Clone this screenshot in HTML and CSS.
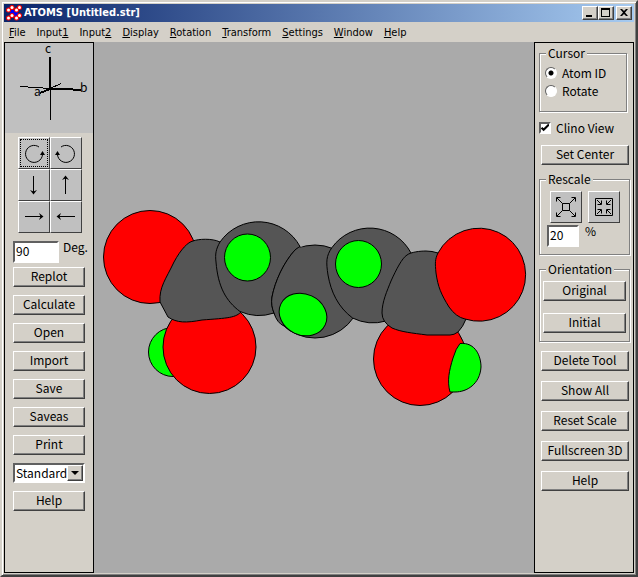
FILE: index.html
```
<!DOCTYPE html>
<html lang="en">
<head>
  <meta charset="UTF-8">
  <title>ATOMS [Untitled.str]</title>
  <link rel="stylesheet" href="styles.css">
</head>
<body>
<div class="window">

  <header class="titlebar">
    <svg class="app-icon" width="16" height="16" viewBox="0 0 16 16">
      <path fill="#0000ff" d="M4 5h8v7h-8z"/>
      <g fill="#ff0000">
        <circle cx="2.500" cy="5" r="2.500"/><circle cx="6" cy="2.500" r="2.500"/><circle cx="10.500" cy="5" r="2.500"/><circle cx="13.500" cy="2.500" r="2.500"/>
        <circle cx="2.500" cy="13" r="2.500"/><circle cx="6" cy="10.500" r="2.500"/><circle cx="10.500" cy="13" r="2.500"/><circle cx="13.500" cy="10.500" r="2.500"/>
      </g>
      <g fill="#ffffff">
        <circle cx="2.500" cy="5" r="1.500"/><circle cx="6" cy="2.500" r="1.500"/><circle cx="10.500" cy="5" r="1.500"/><circle cx="13.500" cy="2.500" r="1.500"/>
        <circle cx="2.500" cy="13" r="1.500"/><circle cx="6" cy="10.500" r="1.500"/><circle cx="10.500" cy="13" r="1.500"/><circle cx="13.500" cy="10.500" r="1.500"/>
      </g>
    </svg>
    <h1>ATOMS [Untitled.str]</h1>
    <div class="caption-buttons">
      <button class="caption-btn" aria-label="Minimize"><svg width="12" height="10"><path d="M2 7h6v2h-6z"/></svg></button>
      <button class="caption-btn" aria-label="Maximize"><svg width="12" height="10"><path fill-rule="evenodd" d="M1 0h9v9h-9zM2 2v6h7v-6z"/></svg></button>
      <button class="caption-btn close" aria-label="Close"><svg width="12" height="10"><path d="M2 1h2l2 2 2-2h2l-3 3.500 3 3.500h-2l-2-2-2 2h-2l3-3.500z"/></svg></button>
    </div>
  </header>

  <nav class="menu">
    <a href="#"><u>F</u>ile</a>
    <a href="#">Input<u>1</u></a>
    <a href="#">Input<u>2</u></a>
    <a href="#"><u>D</u>isplay</a>
    <a href="#"><u>R</u>otation</a>
    <a href="#"><u>T</u>ransform</a>
    <a href="#"><u>S</u>ettings</a>
    <a href="#"><u>W</u>indow</a>
    <a href="#"><u>H</u>elp</a>
  </nav>

  <div class="workspace">
    <aside class="panel left">
      <svg class="axes" viewBox="5 43 88 90">
        <g stroke="#000" fill="none" shape-rendering="crispEdges">
          <path d="M50.500 89V120M20 86.500L50 88.500L61 83.500"/>
          <path stroke-width="2" d="M50 57V89L65 89L81 90M50 89L40 93"/>
        </g>
        <text x="45" y="53">c</text>
        <text x="34" y="96">a</text>
        <text x="80" y="92">b</text>
      </svg>

      <div class="rotate-grid">
        <button class="icon-btn focused" aria-label="Rotate clockwise"><svg width="24" height="24" viewBox="0 0 24 24"><path d="M17 6A8.500 8.500 0 1 0 20.500 12"/><path class="head" d="M18 14L20.500 10L23 14z"/></svg></button>
        <button class="icon-btn" aria-label="Rotate counterclockwise"><svg width="24" height="24" viewBox="0 0 24 24"><path d="M7 6A8.500 8.500 0 1 1 3.500 12"/><path class="head" d="M1 14L3.500 10L6 14z"/></svg></button>
        <button class="icon-btn" aria-label="Down"><svg width="24" height="24" viewBox="0 0 24 24"><path d="M11.500 3V20"/><path class="head" d="M8 17L11.500 18.500L15 17L11.500 21.500z"/></svg></button>
        <button class="icon-btn" aria-label="Up"><svg width="24" height="24" viewBox="0 0 24 24"><path d="M11.500 4V21"/><path class="head" d="M8 7L11.500 5.500L15 7L11.500 2.500z"/></svg></button>
        <button class="icon-btn" aria-label="Right"><svg width="24" height="24" viewBox="0 0 24 24"><path d="M3 11.500H20"/><path class="head" d="M17 8L18.500 11.500L17 15L21.500 11.500z"/></svg></button>
        <button class="icon-btn" aria-label="Left"><svg width="24" height="24" viewBox="0 0 24 24"><path d="M4 11.500H21"/><path class="head" d="M7 8L5.500 11.500L7 15L2.500 11.500z"/></svg></button>
      </div>

      <div class="deg-row">
        <input type="text" id="deg" value="90">
        <label for="deg">Deg.</label>
      </div>

      <div class="left-buttons">
        <button class="btn">Replot</button>
        <button class="btn">Calculate</button>
        <button class="btn">Open</button>
        <button class="btn">Import</button>
        <button class="btn">Save</button>
        <button class="btn">Saveas</button>
        <button class="btn">Print</button>
        <div class="select-box">
          <select aria-label="Model type">
            <option>Standard</option>
          </select>
          <span class="arrow"></span>
        </div>
        <button class="btn">Help</button>
      </div>
    </aside>

    <main class="canvas">
      <svg class="molecule" viewBox="94 42 440 531">
        <g stroke="#000" stroke-width="1">
          <!-- left end -->
          <circle class="oxygen" cx="150" cy="257" r="46.500"/>
          <circle class="hydrogen" cx="173" cy="352" r="24.500"/>
          <circle class="oxygen" cx="209.500" cy="347" r="46.500"/>
          <path class="carbon" d="M193 241C198 239 212 238 220 242L242 311C236 318 228 318 202 320C186 323 177 323 168 317L160 302C159 287 166 279 174 262C181 249 188 242 193 241Z"/>
          <!-- chain -->
          <circle class="carbon" cx="315" cy="291.500" r="46.500"/>
          <path class="carbon" d="M220 242A47 47 0 0 1 300 246.500L295 250C284 262 275 281 272 297C271 303 272 308 274 313A47 47 0 0 1 240 311.500C226 301 218 287 216 262C215 254 216 249 220 242Z"/>
          <path class="carbon" d="M300 246.500L295 250C284 262 275 281 272 297C271 303 272 308 274 313Q277 323 284 326L300 300Z"/>
          <path class="carbon nostroke" d="M299 247.500L296 250C285 262 276 281 273 297C272 305 274 317 284 325L316 318V247Z"/>
          <ellipse class="hydrogen" cx="247.500" cy="257.500" rx="23" ry="23.500"/>
          <ellipse class="hydrogen" cx="303" cy="314.500" rx="24.500" ry="20.500" transform="rotate(25 303 314.500)"/>
          <path class="carbon" d="M332 247.500A46.500 46.500 0 0 1 411 253L386 321A46.500 46.500 0 0 1 352.500 318C338 307 331 292 328 275C326 262 326 256 332 247.500Z"/>
          <ellipse class="hydrogen" cx="358.500" cy="264" rx="23" ry="23.500"/>
          <!-- right end -->
          <circle class="oxygen" cx="420" cy="359" r="46.500"/>
          <path class="carbon" d="M407 255C411 252 420 251 426 251Q432 251 438 253L466 319Q463 327 458 332Q454 335 450 335L427 335C412 333 401 332 392 328Q382 322 382 313C382 302 387 291 391 281C396 270 402 258 407 255Z"/>
          <path class="oxygen" d="M438 253A46.500 46.500 0 1 1 465 319Q456 317 449 307C441 294 438 287 436 273C435 263 435 259 438 253Z"/>
          <path class="hydrogen" d="M460 343.500C476 342 481 357 481 367C480 384 467 392 455 392H450C447 381 449 371 453 358Q456 348 460 343.500Z"/>
        </g>
      </svg>
    </main>

    <aside class="panel right">
      <fieldset class="group cursor-group">
        <legend>Cursor</legend>
        <label class="choice"><input type="radio" name="cursor" checked>Atom ID</label>
        <label class="choice"><input type="radio" name="cursor">Rotate</label>
      </fieldset>

      <label class="choice clino"><input type="checkbox" checked>Clino View</label>
      <button class="btn set-center">Set Center</button>

      <fieldset class="group rescale-group">
        <legend>Rescale</legend>
        <div class="scale-buttons">
          <button class="icon-btn" aria-label="Enlarge"><svg width="24" height="24" viewBox="0 0 24 24"><path d="M8.500 8.500h7v7h-7zM8.500 8.500L3 3M15.500 8.500L21 3M8.500 15.500L3 21M15.500 15.500L21 21M2.500 6.500V2.500H6.500M17.500 2.500H21.500V6.500M2.500 17.500V21.500H6.500M21.500 17.500V21.500H17.500"/></svg></button>
          <button class="icon-btn" aria-label="Reduce"><svg width="24" height="24" viewBox="0 0 24 24"><path d="M3.500 3.500h17v17h-17zM5 5L9 9M19 5L15 9M5 19L9 15M19 19L15 15M5.500 9.500H9.500V5.500M14.500 5.500V9.500H18.500M5.500 14.500H9.500V18.500M14.500 18.500V14.500H18.500"/></svg></button>
        </div>
        <div class="percent-row">
          <input type="text" id="percent" value="20">
          <label for="percent">%</label>
        </div>
      </fieldset>

      <fieldset class="group orient-group">
        <legend>Orientation</legend>
        <button class="btn">Original</button>
        <button class="btn">Initial</button>
      </fieldset>

      <div class="right-buttons">
        <button class="btn">Delete Tool</button>
        <button class="btn">Show All</button>
        <button class="btn">Reset Scale</button>
        <button class="btn">Fullscreen 3D</button>
        <button class="btn">Help</button>
      </div>
    </aside>
  </div>
</div>
</body>
</html>
```

FILE: styles.css
```
* {
  box-sizing: border-box;
}
body {
  margin: 0;
  font-family: "Noto Sans CJK JP", "Liberation Sans", sans-serif;
  font-size: 12px;
  line-height: 16px;
  color: #000;
}
button, input, select {
  font: inherit;
  color: inherit;
}
.window {
  display: flex;
  flex-direction: column;
  min-height: 100vh;
  padding: 2px;
  background: #d4d0c8;
  border: 2px solid;
  border-color: #d4d0c8 #404040 #404040 #d4d0c8;
  box-shadow: inset 1px 1px #fff, inset -1px -1px #808080;
}

/* title bar */
.titlebar {
  display: flex;
  align-items: center;
  height: 18px;
  padding: 0 2px;
  background: linear-gradient(to right, #0a246a, #a6caf0);
}
.titlebar h1 {
  flex: 1;
  margin: 0 0 0 2px;
  font: bold 11px/18px "DejaVu Sans Condensed", "DejaVu Sans", sans-serif;
  color: #fff;
}
.caption-buttons {
  display: flex;
}
.caption-btn {
  width: 16px;
  height: 14px;
  padding: 1px;
  background: #d4d0c8;
  border: 1px solid;
  border-color: #fff #404040 #404040 #fff;
  box-shadow: inset -1px -1px #808080;
}
.caption-btn svg {
  display: block;
}
.caption-btn.close {
  margin-left: 2px;
}

/* menu */
.menu {
  display: flex;
  gap: 11px;
  height: 20px;
  padding: 0 5px;
  font: 11px/22px "DejaVu Sans Condensed", "DejaVu Sans", sans-serif;
}
.menu a {
  color: #000;
  text-decoration: none;
}

.workspace {
  flex: 1;
  display: flex;
}
.panel {
  display: flex;
  flex-direction: column;
  border: 1px solid #000;
}
.left {
  width: 90px;
}
.right {
  width: 100px;
  padding: 2px 3px 0 4px;
}
.canvas {
  flex: 1;
  display: flex;
  min-width: 0;
  background: #aaa;
}
.molecule {
  width: 100%;
}
.oxygen {
  fill: #f00;
}
.carbon {
  fill: #555;
}
.hydrogen {
  fill: #0f0;
}
.nostroke {
  stroke: none;
}

/* buttons */
.btn {
  display: block;
  width: 100%;
  height: 20px;
  padding: 0 0 2px;
  line-height: 16px;
  background: #d4d0c8;
  border: 1px solid;
  border-color: #fff #404040 #404040 #fff;
  box-shadow: inset -1px -1px #808080;
}
.icon-btn {
  width: 32px;
  height: 32px;
  padding: 3px;
  background: #c0c0c0;
  border: 1px solid;
  border-color: #fff #404040 #404040 #fff;
}
.icon-btn svg {
  display: block;
  fill: none;
  stroke: #000;
}
.icon-btn .head {
  fill: #000;
  stroke: none;
}
.focused {
  padding: 1px;
}
.focused svg {
  width: 28px;
  height: 28px;
  padding: 1px;
  border: 1px dotted #000;
}
input[type="text"] {
  height: 22px;
  padding: 0 1px 4px;
  background: #fff;
  border: 2px solid;
  border-color: #606060 #fff #fff #606060;
  border-radius: 0;
}

/* left panel */
.axes {
  width: 100%;
  height: 90px;
  overflow: visible;
  background: #c0c0c0;
}
.rotate-grid {
  display: grid;
  grid-template-columns: 32px 32px;
  margin: 4px 0 8px 13px;
}
.deg-row {
  display: flex;
  gap: 4px;
  padding-left: 8px;
}
.deg-row label {
  line-height: 12px;
}
.deg-row input {
  width: 46px;
}
.left-buttons {
  display: flex;
  flex-direction: column;
  gap: 8px;
  padding: 4px 8px 0;
}
.select-box {
  position: relative;
  height: 20px;
}
.select-box select {
  display: block;
  width: 100%;
  height: 20px;
  padding: 0 1px;
  appearance: none;
  background: #fff;
  border: 2px solid;
  border-color: #606060 #fff #fff #606060;
  border-radius: 0;
}
.select-box .arrow {
  position: absolute;
  top: 2px;
  right: 2px;
  width: 16px;
  height: 16px;
  background: #d4d0c8;
  border: 1px solid;
  border-color: #fff #404040 #404040 #fff;
  box-shadow: inset -1px -1px #808080;
  pointer-events: none;
}
.select-box .arrow::after {
  content: "";
  position: absolute;
  top: 5px;
  left: 3px;
  border: 4px solid transparent;
  border-top-color: #000;
  border-bottom: 0;
}

/* right panel */
.group {
  min-width: 0;
  margin: 0;
  padding: 0 3px;
  border: 1px solid #808080;
  box-shadow: 1px 1px #fff, inset 1px 1px #fff;
}
.group legend {
  margin-left: 3px;
  padding: 0 2px;
  line-height: 16px;
  background: #d4d0c8;
}
.cursor-group {
  height: 67px;
  margin-right: 3px;
}
.choice {
  display: flex;
  align-items: center;
  gap: 5px;
  height: 18px;
  padding-left: 2px;
}
.cursor-group legend + .choice {
  margin-top: 3px;
}
.choice input {
  flex: none;
  appearance: none;
  width: 12px;
  height: 12px;
  margin: 0;
  background: #fff;
  border: 2px solid;
  border-color: #606060 #fff #fff #606060;
}
.choice input[type="radio"] {
  border-width: 1px;
  border-radius: 50%;
}
.choice input[type="radio"]:checked {
  background: radial-gradient(circle, #000 2px, #fff 3px);
}
.clino {
  margin-top: 7px;
  padding-left: 0;
}
.choice input[type="checkbox"]:checked {
  background: #fff url("data:image/svg+xml,%3Csvg xmlns='http://www.w3.org/2000/svg' viewBox='0 0 9 9'%3E%3Cpath d='M1 4l2 2 5-5' fill='none' stroke='%23000' stroke-width='2'/%3E%3C/svg%3E") center / 9px 9px no-repeat;
}
.set-center {
  width: auto;
  margin: 8px 1px 6px 2px;
}
.rescale-group {
  height: 84px;
  margin-bottom: 6px;
}
.scale-buttons {
  display: flex;
  gap: 6px;
  padding: 4px 0 2px 7px;
}
.percent-row {
  display: flex;
  gap: 6px;
  padding-left: 4px;
}
.percent-row input {
  width: 32px;
}
.percent-row label {
  line-height: 12px;
}
.orient-group {
  height: 81px;
}
.orient-group .btn {
  margin: 4px 0 12px;
}
.right-buttons {
  display: flex;
  flex-direction: column;
  gap: 10px;
  padding: 9px 1px 0 2px;
}
```
